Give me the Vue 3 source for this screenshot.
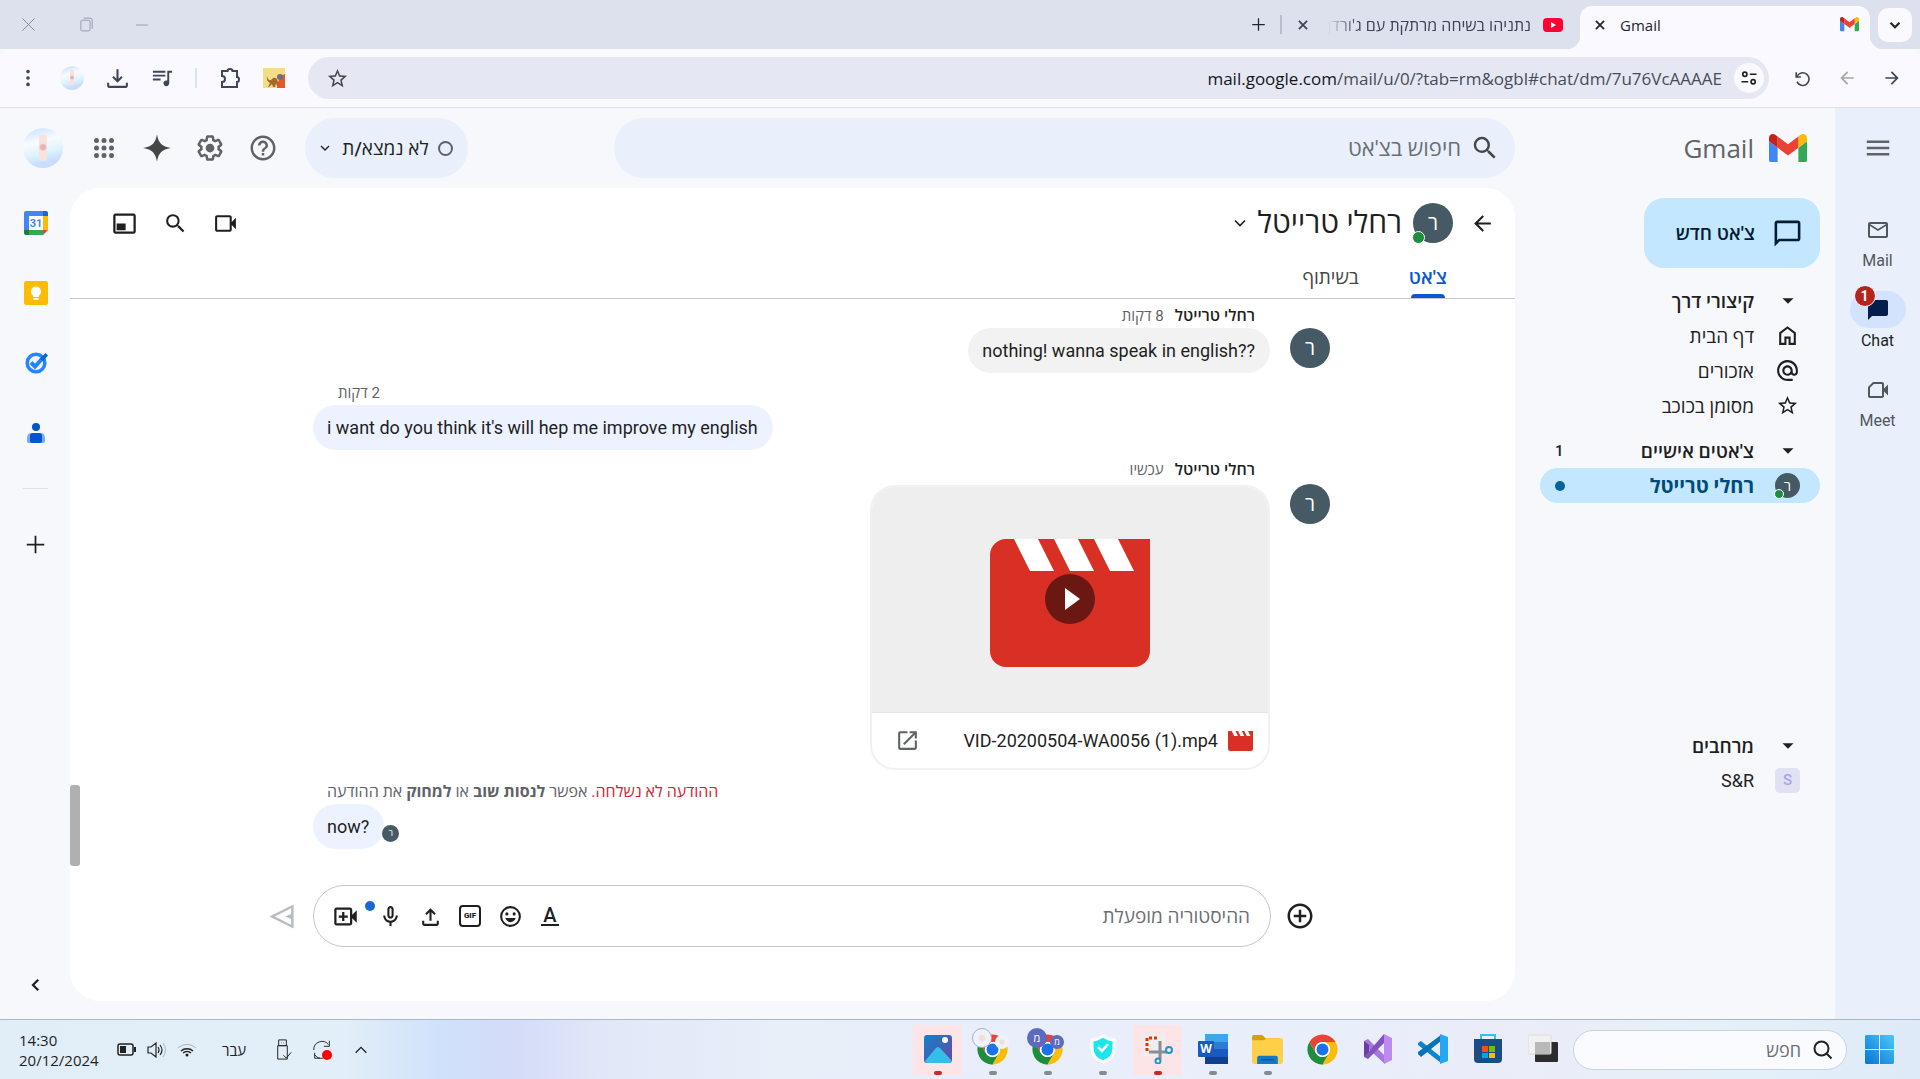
<script setup>
import { h, ref } from 'vue'

const paths = {
  menu: 'M3 18h18v-2H3v2zm0-5h18v-2H3v2zm0-7v2h18V6H3z',
  search: 'M15.5 14h-.79l-.28-.27A6.47 6.47 0 0 0 16 9.5 6.5 6.5 0 1 0 9.5 16c1.61 0 3.09-.59 4.23-1.57l.27.28v.79l5 4.99L20.49 19l-4.99-5zm-6 0C7.01 14 5 11.99 5 9.5S7.01 5 9.5 5 14 7.01 14 9.5 11.99 14 9.5 14z',
  help: 'M11 18h2v-2h-2v2zm1-16C6.48 2 2 6.48 2 12s4.48 10 10 10 10-4.48 10-10S17.52 2 12 2zm0 18c-4.41 0-8-3.59-8-8s3.59-8 8-8 8 3.59 8 8-3.59 8-8 8zm0-14c-2.21 0-4 1.79-4 4h2c0-1.1.9-2 2-2s2 .9 2 2c0 2-3 1.75-3 5h2c0-2.25 3-2.5 3-5 0-2.21-1.79-4-4-4z',
  settings: 'M13.85 22.25h-3.7c-.74 0-1.36-.54-1.45-1.27l-.27-1.89c-.27-.14-.53-.29-.79-.46l-1.8.72c-.7.26-1.47-.03-1.81-.65L2.2 15.53c-.35-.66-.2-1.44.36-1.88l1.53-1.19c-.01-.15-.02-.3-.02-.46 0-.15.01-.31.02-.46l-1.52-1.19c-.59-.45-.74-1.26-.37-1.88l1.85-3.19c.34-.62 1.11-.9 1.79-.63l1.81.73c.26-.17.52-.32.78-.46l.27-1.91c.09-.7.71-1.25 1.44-1.25h3.7c.74 0 1.36.54 1.45 1.27l.27 1.89c.27.14.53.29.79.46l1.8-.72c.71-.26 1.48.03 1.82.65l1.84 3.18c.36.66.2 1.44-.36 1.88l-1.52 1.19c.01.15.02.3.02.46s-.01.31-.02.46l1.52 1.19c.56.45.72 1.23.37 1.86l-1.86 3.22c-.34.62-1.11.9-1.8.63l-1.8-.72c-.26.17-.52.32-.78.46l-.27 1.91c-.1.68-.72 1.22-1.46 1.22zm-3.23-2h2.76l.37-2.55.53-.22c.44-.18.88-.44 1.34-.78l.45-.34 2.38.96 1.38-2.4-2.03-1.58.07-.56c.03-.26.06-.51.06-.78s-.03-.53-.06-.78l-.07-.56 2.03-1.58-1.39-2.4-2.39.96-.45-.35c-.42-.32-.87-.58-1.33-.77l-.52-.22-.37-2.55h-2.76l-.37 2.55-.53.21c-.44.19-.88.44-1.34.79l-.45.33-2.38-.95-1.39 2.39 2.03 1.58-.07.56a7 7 0 0 0-.06.79c0 .26.02.53.06.78l.07.56-2.03 1.58 1.38 2.4 2.39-.96.45.35c.43.33.86.58 1.33.77l.53.22.38 2.55zM12 8.5a3.5 3.5 0 1 1 0 7 3.5 3.5 0 0 1 0-7z',
  spark: 'M12 1c1.1 7 4 9.900 11 11-7 1.100-9.900 4-11 11-1.100-7-4-9.900-11-11 7-1.100 9.900-4 11-11z',
  apps: 'M6 8a2 2 0 1 0 0-4 2 2 0 0 0 0 4zm6 0a2 2 0 1 0 0-4 2 2 0 0 0 0 4zm6 0a2 2 0 1 0 0-4 2 2 0 0 0 0 4zM6 14a2 2 0 1 0 0-4 2 2 0 0 0 0 4zm6 0a2 2 0 1 0 0-4 2 2 0 0 0 0 4zm6 0a2 2 0 1 0 0-4 2 2 0 0 0 0 4zM6 20a2 2 0 1 0 0-4 2 2 0 0 0 0 4zm6 0a2 2 0 1 0 0-4 2 2 0 0 0 0 4zm6 0a2 2 0 1 0 0-4 2 2 0 0 0 0 4z',
  video: 'M18 10.500V6c0-1.100-.9-2-2-2H4c-1.100 0-2 .9-2 2v12c0 1.100.9 2 2 2h12c1.100 0 2-.9 2-2v-4.500l4 4v-11l-4 4zM16 18H4V6h12v12z',
  videoAdd: 'M18 10.500V6c0-1.100-.9-2-2-2H4c-1.100 0-2 .9-2 2v12c0 1.100.9 2 2 2h12c1.100 0 2-.9 2-2v-4.500l4 4v-11l-4 4zM16 18H4V6h12v12zM9 16h2v-3h3v-2h-3V8H9v3H6v2h3v3z',
  meet: 'M18 10.500V6c0-1.100-.9-2-2-2H7L2 9v9c0 1.100.9 2 2 2h12c1.100 0 2-.9 2-2v-4.500l4 4v-11l-4 4zM16 18H4V9.800L7.800 6H16v12z',
  pip: 'M20 3H4c-1.100 0-2 .9-2 2v14c0 1.100.9 2 2 2h16c1.100 0 2-.9 2-2V5c0-1.100-.9-2-2-2zm0 16H4V5h16v14zM5 12h8v6H5z',
  home: 'M6 19h3v-6h6v6h3v-9l-6-4.500L6 10v9zm-2 2V9l8-6 8 6v12h-7v-6h-2v6H4z',
  at: 'M12 2C6.480 2 2 6.480 2 12s4.480 10 10 10h5v-2h-5c-4.340 0-8-3.660-8-8s3.660-8 8-8 8 3.660 8 8v1.430c0 .79-.71 1.570-1.500 1.570s-1.500-.78-1.500-1.570V12c0-2.760-2.240-5-5-5s-5 2.240-5 5 2.240 5 5 5c1.380 0 2.640-.56 3.540-1.470.65.89 1.770 1.470 2.960 1.470 1.970 0 3.500-1.600 3.500-3.570V12c0-5.520-4.480-10-10-10zm0 13c-1.660 0-3-1.340-3-3s1.340-3 3-3 3 1.340 3 3-1.340 3-3 3z',
  star: 'M22 9.240l-7.190-.62L12 2 9.190 8.630 2 9.240l5.460 4.730L5.820 21 12 17.270 18.180 21l-1.630-7.030L22 9.240zM12 15.400l-3.760 2.270 1-4.280-3.320-2.880 4.380-.38L12 6.100l1.710 4.040 4.380.38-3.320 2.880 1 4.280L12 15.400z',
  mail: 'M20 4H4c-1.100 0-2 .9-2 2v12c0 1.100.9 2 2 2h16c1.100 0 2-.9 2-2V6c0-1.100-.9-2-2-2zm0 14H4V8l8 5 8-5v10zm-8-7L4 6h16l-8 5z',
  bubble: 'M20 2H4c-1.100 0-2 .9-2 2v18l4-4h14c1.100 0 2-.9 2-2V4c0-1.100-.9-2-2-2zm0 14H5.200L4 17.200V4h16v12z',
  bubbleFull: 'M20 2H4c-1.100 0-2 .9-2 2v18l4-4h14c1.100 0 2-.9 2-2V4c0-1.100-.9-2-2-2z',
  open: 'M19 19H5V5h7V3H5c-1.110 0-2 .9-2 2v14c0 1.100.89 2 2 2h14c1.100 0 2-.9 2-2v-7h-2v7zM14 3v2h3.590l-9.830 9.830 1.410 1.410L19 6.410V10h2V3h-7z',
  mic: 'M12 14c1.660 0 3-1.340 3-3V5c0-1.660-1.340-3-3-3S9 3.340 9 5v6c0 1.660 1.340 3 3 3zm-1-9c0-.55.45-1 1-1s1 .45 1 1v6c0 .55-.45 1-1 1s-1-.45-1-1V5zm6 6c0 2.760-2.240 5-5 5s-5-2.240-5-5H5c0 3.530 2.610 6.430 6 6.920V21h2v-3.080c3.390-.49 6-3.390 6-6.920h-2z',
  upload: 'M11 16V7.850l-2.600 2.600L7 9l5-5 5 5-1.400 1.450-2.600-2.600V16zm-5 5c-1.100 0-2-.9-2-2v-3h2v3h12v-3h2v3c0 1.100-.9 2-2 2z',
  download: 'M12 16l-5-5 1.400-1.450 2.600 2.600V3h2v9.150l2.600-2.600L17 11zM4 21c-1.100 0-2-.9-2-2v-3h2v3h16v-3h2v3c0 1.100-.9 2-2 2z',
  emoji: 'M12 2a10 10 0 1 0 0 20 10 10 0 0 0 0-20zm0 18a8 8 0 1 1 0-16 8 8 0 0 1 0 16zM8.500 11a1.500 1.500 0 1 0 0-3 1.500 1.500 0 0 0 0 3zm7 0a1.500 1.500 0 1 0 0-3 1.500 1.500 0 0 0 0 3zM7 13.500h10c-.8 2.400-2.700 4-5 4s-4.200-1.600-5-4z',
  addCircle: 'M13 7h-2v4H7v2h4v4h2v-4h4v-2h-4V7zm-1-5C6.480 2 2 6.480 2 12s4.480 10 10 10 10-4.480 10-10S17.520 2 12 2zm0 18c-4.410 0-8-3.590-8-8s3.590-8 8-8 8 3.590 8 8-3.590 8-8 8z',
  back: 'M20 11H7.830l5.590-5.590L12 4l-8 8 8 8 1.410-1.410L7.830 13H20v-2z',
  forward: 'M4 11h12.170l-5.590-5.590L12 4l8 8-8 8-1.410-1.410L16.170 13H4v-2z',
  queue: 'M22 4h-5v10.180c-.31-.11-.65-.18-1-.18-1.660 0-3 1.340-3 3s1.340 3 3 3 3-1.340 3-3V6h3V4zM15 4H2v2h13V4zm0 4H2v2h13V8zm-5 4H2v2h8v-2z',
  more: 'M12 7a2 2 0 1 0 0-4 2 2 0 0 0 0 4zm0 7a2 2 0 1 0 0-4 2 2 0 0 0 0 4zm0 7a2 2 0 1 0 0-4 2 2 0 0 0 0 4z',
  triangle: 'M6 9l6 6 6-6z',
  plus: 'M11 2h2v9h9v2h-9v9h-2v-9H2v-2h9z',
  tune: 'M7 4a3.500 3.500 0 1 0 0 7 3.500 3.500 0 0 0 0-7zm0 2a1.500 1.500 0 1 1 0 3 1.500 1.500 0 0 1 0-3zm6 .5h8v2h-8zM17 13a3.500 3.500 0 1 0 0 7 3.500 3.500 0 0 0 0-7zm0 2a1.500 1.500 0 1 1 0 3 1.500 1.500 0 0 1 0-3zM3 15.500h8v2H3z',
  send: 'M2 12L22 2v20L2 12zm4.500 0L20 18.800V14l-5-2 5-2V5.200L6.500 12z'
}
const strokes = {
  down: 'M6 9l6 6 6-6',
  up: 'M4 16l8-8 8 8',
  left: 'M15 5l-7 7 7 7',
  x: 'M5 5l14 14M19 5L5 19',
  minus: 'M3 12h18',
  restore: 'M6 6h9a2 2 0 0 1 2 2v11a2 2 0 0 1-2 2H6a2 2 0 0 1-2-2V8a2 2 0 0 1 2-2zM8 3h9a3 3 0 0 1 3 3v12',
  puzzle: 'M4 5h5.500a2.500 2 0 0 1 5 0H19v6a2 2.500 0 0 1 0 5v5H4v-5a3 3 0 0 0 0-6z',
  reload: 'M4 4v6h6M5 9.500A8 8 0 1 1 5 16',
  usb: 'M8 2h8v6H8zM10.500 5h.5M13 5h.5M17 8v14H7V8zM13 18l3 3 5-6',
  sync: 'M3 12a9 9 0 0 1 16-6M20 2v6h-6M4 15v6h6M4 17a9 9 0 0 0 9 4'
}
const Icon = ({ name, size = 25, weight = 2 }) =>
  h('svg', { class: 'icon', viewBox: '0 0 24 24', width: size, height: size, 'aria-hidden': 'true' },
    paths[name]
      ? [h('path', { d: paths[name], fill: 'currentColor', 'fill-rule': 'evenodd' })]
      : [h('path', { d: strokes[name], fill: 'none', stroke: 'currentColor', 'stroke-width': weight })])
Icon.props = ['name', 'size', 'weight']

const GmailMark = ({ width }) =>
  h('svg', { class: 'icon', viewBox: '0 0 88 66', width, 'aria-hidden': 'true' }, [
    h('path', { fill: '#4285f4', d: 'M6 66h14V32L0 17v43c0 3.320 2.690 6 6 6' }),
    h('path', { fill: '#34a853', d: 'M68 66h14c3.320 0 6-2.690 6-6V17L68 32' }),
    h('path', { fill: '#fbbc04', d: 'M68 6v26l20-15V9c0-7.420-8.470-11.650-14.400-7.200' }),
    h('path', { fill: '#ea4335', d: 'M20 32V6l24 18L68 6v26L44 50' }),
    h('path', { fill: '#c5221f', d: 'M0 9v8l20 15V6l-5.600-4.200C8.470-2.650 0 1.580 0 9' })
  ])
GmailMark.props = ['width']

const ChromeMark = () =>
  h('svg', { class: 'icon', viewBox: '0 0 48 48', width: 33, height: 33, 'aria-hidden': 'true' }, [
    h('path', { fill: '#1e8e3e', d: 'M4.950 13A22 22 0 0 0 24 46l9.530-16.500a11 11 0 0 1-19.060 0z' }),
    h('path', { fill: '#fbbc04', d: 'M24 46a22 22 0 0 0 19.050-33H24a11 11 0 0 1 9.530 16.500z' }),
    h('path', { fill: '#ea4335', d: 'M43.050 13a22 22 0 0 0-38.100 0l9.520 16.500A11 11 0 0 1 24 13z' }),
    h('circle', { cx: 24, cy: 24, r: 11, fill: '#fff' }),
    h('circle', { cx: 24, cy: 24, r: 8.7, fill: '#1a73e8' })
  ])

const shortcuts = [
  { icon: 'home', label: 'דף הבית' },
  { icon: 'at', label: 'אזכורים' },
  { icon: 'star', label: 'מסומן בכוכב' }
]
const apps = [
  { id: 'tasks', label: 'תצוגת משימות' },
  { id: 'store', label: 'Microsoft Store' },
  { id: 'vscode', label: 'Visual Studio Code' },
  { id: 'vs', label: 'Visual Studio' },
  { id: 'chrome', label: 'Chrome' },
  { id: 'files', label: 'סייר הקבצים', mark: 'idle' },
  { id: 'word', label: 'Word', mark: 'idle' },
  { id: 'snip', label: 'כלי החיתוך', mark: 'alert' },
  { id: 'shield', label: 'אבטחה', mark: 'idle' },
  { id: 'chromeM', label: 'Chrome מ', mark: 'idle' },
  { id: 'chromeP', label: 'Chrome אישי', mark: 'idle' },
  { id: 'photos', label: 'תמונות', mark: 'alert' }
]
const query = ref('')
const draft = ref('')
const find = ref('')
</script>

<template>
  <div class="screen" dir="rtl">
    <div class="tabstrip">
      <button class="tab-menu" aria-label="חיפוש כרטיסיות"><Icon name="down" :size="18" :weight="3" /></button>
      <div class="tab active">
        <GmailMark :width="19" />
        <span class="tab-title" dir="ltr">Gmail</span>
        <button class="plain" aria-label="סגירה"><Icon name="x" :size="14" :weight="3" /></button>
      </div>
      <div class="tab idle">
        <svg class="icon" viewBox="0 0 20 14" width="20" height="14"><rect width="20" height="14" rx="4" fill="#ff0033" /><path d="M8 4l5 3-5 3z" fill="#fff" /></svg>
        <span class="tab-title fade">נתניהו בשיחה מרתקת עם ג'ורדן</span>
        <button class="plain" aria-label="סגירה"><Icon name="x" :size="14" :weight="3" /></button>
      </div>
      <span class="tab-sep"></span>
      <button class="plain new-tab" aria-label="כרטיסייה חדשה"><Icon name="plus" :size="15" /></button>
      <div class="window-buttons">
        <button class="plain" aria-label="מזעור"><Icon name="minus" :size="16" :weight="1" /></button>
        <button class="plain" aria-label="שחזור"><Icon name="restore" :size="17" :weight="1" /></button>
        <button class="plain" aria-label="סגירת החלון"><Icon name="x" :size="21" :weight="1" /></button>
      </div>
    </div>

    <div class="toolbar">
      <div class="nav-buttons">
        <button class="plain" aria-label="הקודם"><Icon name="forward" :size="20" /></button>
        <button class="plain off" aria-label="הבא"><Icon name="back" :size="20" /></button>
        <button class="plain" aria-label="טעינה מחדש"><Icon name="reload" :size="19" :weight="2" /></button>
      </div>
      <div class="address">
        <button class="plain site-info" aria-label="פרטי האתר"><Icon name="tune" :size="20" /></button>
        <span class="url" dir="ltr"><b>mail.google.com</b>/mail/u/0/?tab=rm&amp;ogbl#chat/dm/7u76VcAAAAE</span>
        <button class="plain bookmark" aria-label="הוספה לסימניות"><Icon name="star" :size="23" /></button>
      </div>
      <div class="extensions">
        <svg class="icon" viewBox="0 0 22 20" width="22" height="20"><rect width="22" height="20" fill="#f3dd86" /><path d="M14 20l1-6 3-6 4-2v14z" fill="#e8562b" /><path d="M4 8q1 5 4 4 3-4 6-1l2 7h-2l-1-3-1 4h-2l-1-3-3 3H5l2-4Q3 13 4 8z" fill="#a8652e" /><circle cx="17" cy="9" r="3" fill="#6b6f80" /></svg>
        <button class="plain" aria-label="תוספים"><Icon name="puzzle" :size="24" :weight="2" /></button>
        <span class="tool-sep"></span>
        <button class="plain" aria-label="בקרת מדיה"><Icon name="queue" :size="23" /></button>
        <button class="plain" aria-label="הורדות"><Icon name="download" :size="25" /></button>
        <span class="portrait small"></span>
        <button class="plain" aria-label="עוד"><Icon name="more" :size="22" /></button>
      </div>
    </div>

    <div class="page">
      <nav class="rail">
        <button class="plain rail-menu" aria-label="תפריט ראשי"><Icon name="menu" :size="30" /></button>
        <a class="rail-item" href="#mail"><span class="rail-pill"><Icon name="mail" :size="24" /></span>Mail</a>
        <a class="rail-item on" href="#chat"><span class="rail-pill"><Icon name="bubbleFull" :size="24" /><span class="badge">1</span></span>Chat</a>
        <a class="rail-item" href="#meet"><span class="rail-pill"><Icon name="meet" :size="24" /></span>Meet</a>
      </nav>

      <div class="workspace">
        <header class="topbar">
          <a class="brand" href="#home"><GmailMark :width="38" /><span>Gmail</span></a>
          <label class="search">
            <Icon name="search" :size="30" />
            <input v-model="query" type="text" placeholder="חיפוש בצ'אט" aria-label="חיפוש בצ'אט" />
          </label>
          <button class="status"><span class="ring"></span>לא נמצא/ת<Icon name="down" :size="16" :weight="2" /></button>
          <div class="top-actions">
            <button class="plain" aria-label="תמיכה"><Icon name="help" :size="30" /></button>
            <button class="plain" aria-label="הגדרות"><Icon name="settings" :size="30" /></button>
            <button class="plain dark" aria-label="Gemini"><Icon name="spark" :size="30" /></button>
            <button class="plain" aria-label="אפליקציות"><Icon name="apps" :size="30" /></button>
          </div>
          <span class="portrait"></span>
        </header>

        <div class="columns">
          <aside class="sidebar">
            <button class="new-chat"><Icon name="bubble" :size="31" />צ'אט חדש</button>
            <section class="group">
              <h2 class="row head"><span class="lead"><Icon name="triangle" :size="22" /></span>קיצורי דרך</h2>
              <a v-for="s in shortcuts" :key="s.icon" class="row" :href="'#' + s.icon"><span class="lead"><Icon :name="s.icon" :size="s.icon === 'star' ? 23 : 25" /></span>{{ s.label }}</a>
            </section>
            <section class="group direct">
              <h2 class="row head"><span class="lead"><Icon name="triangle" :size="22" /></span>צ'אטים אישיים<span class="count">1</span></h2>
              <a class="row current" href="#dm"><span class="lead"><span class="avatar tiny">ר<i class="online"></i></span></span>רחלי טרייטל<span class="unread"></span></a>
            </section>
            <section class="group">
              <h2 class="row head"><span class="lead"><Icon name="triangle" :size="22" /></span>מרחבים</h2>
              <a class="row latin" href="#space"><span class="lead"><span class="space">S</span></span>S&amp;R</a>
            </section>
          </aside>

          <main class="panel">
            <div class="chat-head">
              <button class="plain" aria-label="חזרה"><Icon name="back" :size="25" /></button>
              <span class="avatar">ר<i class="online"></i></span>
              <h1>רחלי טרייטל</h1>
              <button class="plain" aria-label="אפשרויות"><Icon name="down" :size="20" :weight="2" /></button>
              <div class="chat-tools">
                <button class="plain" aria-label="שיחת וידאו"><Icon name="video" :size="25" /></button>
                <button class="plain" aria-label="חיפוש"><Icon name="search" :size="25" /></button>
                <button class="plain" aria-label="חלון צף"><Icon name="pip" :size="27" /></button>
              </div>
            </div>
            <div class="chat-tabs"><a class="on" href="#thread">צ'אט</a><a href="#shared">בשיתוף</a></div>

            <div class="thread">
              <div class="scroll-thumb"></div>
              <article class="message">
                <p class="meta"><b>רחלי טרייטל</b><span>8 דקות</span></p>
                <div class="body"><span class="avatar">ר</span><p class="bubble" dir="ltr">nothing! wanna speak in english??</p></div>
              </article>
              <article class="message mine">
                <p class="meta"><span>2 דקות</span></p>
                <p class="bubble" dir="ltr">i want do you think it's will hep me improve my english</p>
              </article>
              <article class="message media">
                <p class="meta"><b>רחלי טרייטל</b><span>עכשיו</span></p>
                <div class="body">
                  <span class="avatar">ר</span>
                  <div class="card">
                    <div class="preview">
                      <svg viewBox="0 0 160 128" width="160" height="128" aria-hidden="true">
                        <path d="M16 0H160V112a16 16 0 0 1-16 16H16a16 16 0 0 1-16-16V16A16 16 0 0 1 16 0z" fill="#d93025" />
                        <path d="M24 0H48L64 32H40zM64 0H88l16 32H80zM104 0h24l16 32h-24z" fill="#fff" />
                        <circle cx="80" cy="60" r="25" fill="#6c1812" /><path d="M75 49v22l15-11z" fill="#fff" />
                      </svg>
                    </div>
                    <div class="file">
                      <svg viewBox="0 0 160 128" width="25" height="20" aria-hidden="true">
                        <path d="M0 0H160V112a16 16 0 0 1-16 16H16a16 16 0 0 1-16-16z" fill="#d93025" />
                        <path d="M24 0H48L64 32H40zM64 0H88l16 32H80zM104 0h24l16 32h-24z" fill="#fff" />
                      </svg>
                      <span dir="ltr">VID-20200504-WA0056 (1).mp4</span>
                      <button class="plain" aria-label="פתיחה בכרטיסייה חדשה"><Icon name="open" :size="25" /></button>
                    </div>
                  </div>
                </div>
              </article>
              <article class="message mine">
                <p class="failed"><em>ההודעה לא נשלחה.</em> אפשר <b>לנסות שוב</b> או <b>למחוק</b> את ההודעה</p>
                <p class="bubble" dir="ltr">now?<span class="avatar seen">ר</span></p>
              </article>
            </div>

            <form class="composer" @submit.prevent>
              <button class="plain" type="button" aria-label="הוספה"><Icon name="addCircle" :size="30" /></button>
              <div class="field">
                <input v-model="draft" type="text" placeholder="ההיסטוריה מופעלת" aria-label="ההיסטוריה מופעלת" />
                <div class="tools">
                  <button class="plain" type="button" aria-label="עיצוב"><span class="format">A</span></button>
                  <button class="plain" type="button" aria-label="אמוג'י"><Icon name="emoji" :size="25" /></button>
                  <button class="plain" type="button" aria-label="GIF"><span class="gif">GIF</span></button>
                  <button class="plain" type="button" aria-label="העלאה"><Icon name="upload" :size="25" /></button>
                  <button class="plain mic" type="button" aria-label="הקלטה"><Icon name="mic" :size="25" /></button>
                  <button class="plain wide" type="button" aria-label="פגישה"><Icon name="videoAdd" :size="27" /></button>
                </div>
              </div>
              <button class="plain send" type="submit" aria-label="שליחה"><Icon name="send" :size="29" /></button>
            </form>
          </main>

          <aside class="addons">
            <button class="plain" aria-label="יומן">
              <svg viewBox="0 0 24 24" width="24" height="24"><path d="M2 0h17v5H5v14H0V2a2 2 0 0 1 2-2z" fill="#4285f4" /><path d="M19 0h3a2 2 0 0 1 2 2v3h-5z" fill="#1967d2" /><path d="M19 5h5v14h-5z" fill="#fbbc04" /><path d="M5 19h14v5H5z" fill="#34a853" /><path d="M0 19h5v5H2a2 2 0 0 1-2-2z" fill="#188038" /><path d="M19 19h5l-5 5z" fill="#ea4335" /><path d="M5 5h14v14H5z" fill="#fff" /><text x="12" y="16" text-anchor="middle" font-size="11" font-weight="700" fill="#4285f4">31</text></svg>
            </button>
            <button class="plain" aria-label="Keep">
              <svg viewBox="0 0 24 24" width="24" height="24"><rect width="24" height="24" rx="2" fill="#fbbc04" /><path d="M12 5.500a5 5 0 0 1 3 9V16H9v-1.500a5 5 0 0 1 3-9zM9.500 17h5v2h-5z" fill="#fff" /></svg>
            </button>
            <button class="plain" aria-label="משימות">
              <svg viewBox="0 0 24 24" width="24" height="24"><circle cx="12" cy="12" r="8.800" fill="none" stroke="#2684fc" stroke-width="3.500" /><path d="M7 11.500l4 4L20.500 5" fill="none" stroke="#2684fc" stroke-width="4" /><path d="M16 8l5.500-6L24 4.500 19 10z" fill="#0066da" /></svg>
            </button>
            <button class="plain" aria-label="אנשי קשר">
              <svg viewBox="0 0 24 24" width="24" height="24"><circle cx="12" cy="6" r="4" fill="#0057cc" /><path d="M8 12h8q5 0 5 5v3q0 2-2 2H4q-1 0-1-2v-3q0-5 5-5z" fill="#7baaf7" /><path d="M9 12h6q3 0 3 3v5q0 2-2 2H8q-2 0-2-2v-5q0-3 3-3z" fill="#0057cc" /></svg>
            </button>
            <hr />
            <button class="plain get-more" aria-label="הורדת תוספים"><Icon name="plus" :size="21" /></button>
            <button class="plain collapse" aria-label="הסתרת החלונית"><Icon name="left" :size="18" :weight="3" /></button>
          </aside>
        </div>
      </div>
    </div>

    <footer class="taskbar">
      <button class="plain start" aria-label="התחל">
        <svg viewBox="0 0 29 29" width="29" height="29"><defs><linearGradient id="win" x1="1" y1="0" x2="0" y2="1"><stop offset="0" stop-color="#4cc9fb" /><stop offset="1" stop-color="#0873d1" /></linearGradient></defs><path d="M1 0h13v14H0V1zM15 0h13l1 1v13H15zM0 15h14v14H1l-1-1zM15 15h14v13l-1 1H15z" fill="url(#win)" /></svg>
      </button>
      <label class="task-search"><svg viewBox="0 0 20 20" width="20" height="20"><path d="M8.500 1.500a7 7 0 1 0 0 14 7 7 0 0 0 0-14zM13.500 13.500l5 5" fill="none" stroke="#222" stroke-width="2" /></svg><input v-model="find" type="text" placeholder="חפש" aria-label="חפש" /></label>
      <div class="apps">
        <button v-for="a in apps" :key="a.id" class="app" :class="a.mark" :aria-label="a.label">
          <svg v-if="a.id === 'tasks'" viewBox="0 0 30 30" width="30" height="30"><rect x="7" y="8" width="23" height="20" rx="1" fill="#2d2d2d" /><rect x="0" y="1" width="23" height="19" rx="1" fill="#f1f1f1" stroke="#dcdcdc" /><path d="M7 8h15v12H7z" fill="#b9b9b9" /></svg>
          <svg v-else-if="a.id === 'store'" viewBox="0 0 30 30" width="30" height="30"><path d="M8 6V1h14v5" fill="none" stroke="#2fc1f3" stroke-width="2" /><path d="M1 5h28v20q0 4-4 4H5q-4 0-4-4z" fill="#1a4c86" /><path d="M9 12h6v6H9z" fill="#f25022" /><path d="M16 12h6v6h-6z" fill="#7fba00" /><path d="M9 19h6v5H9z" fill="#00a4ef" /><path d="M16 19h6v5h-6z" fill="#ffb900" /></svg>
          <svg v-else-if="a.id === 'vscode'" viewBox="0 0 30 30" width="30" height="30"><path d="M0 9l3-2 20 16v6L0 11z" fill="#0a87d0" /><path d="M0 20l3 3L23 7V1L0 18z" fill="#0673b5" /><path d="M22 0l8 3v24l-8 3z" fill="#27a6f2" /></svg>
          <svg v-else-if="a.id === 'vs'" viewBox="0 0 30 30" width="30" height="30"><path d="M1 7l4-2 17 17v8L1 11z" fill="#a775dc" /><path d="M1 7v16l5-4V11z" fill="#6a3ea1" /><path d="M5 25l-4-2L21 0v9z" fill="#8252bd" /><path d="M21 0l8 4v22l-8 4z" fill="#bd8bf0" /></svg>
          <ChromeMark v-else-if="a.id === 'chrome'" />
          <svg v-else-if="a.id === 'files'" viewBox="0 0 30 30" width="31" height="31"><path d="M0 3q0-2 2-2h8l3 3h14v8H0z" fill="#dc9c0b" /><path d="M0 6h12l2-2h14q2 0 2 2v20q0 3-2 3H2q-2 0-2-2z" fill="#ffcf48" /><path d="M5 29v-6q0-2 2-2h16q2 0 2 2v6z" fill="#1378c6" /><path d="M9 25h12" stroke="#0a4c91" stroke-width="1" /></svg>
          <svg v-else-if="a.id === 'word'" viewBox="0 0 30 30" width="30" height="30"><path d="M7 0h23v8H7z" fill="#41a5ee" /><path d="M7 8h23v7H7z" fill="#2b7cd3" /><path d="M7 15h23v8H7z" fill="#185abd" /><path d="M7 23h23v7H7z" fill="#103f91" /><rect y="7" width="16" height="16" rx="1" fill="#185abd" /><text x="8" y="19" text-anchor="middle" font-size="12" font-weight="700" fill="#fff">W</text></svg>
          <svg v-else-if="a.id === 'snip'" viewBox="0 0 30 30" width="30" height="30"><rect width="22" height="22" rx="1" fill="#eee" /><path d="M4 17V4h12" fill="none" stroke="#d83b01" stroke-width="3" stroke-dasharray="3 2" /><path d="M6 18h18M17 7v18" stroke="#888e94" stroke-width="3" /><circle cx="26" cy="16" r="3" fill="none" stroke="#1c94d8" stroke-width="2" /><circle cx="15" cy="27" r="2.500" fill="none" stroke="#1c94d8" stroke-width="2" /></svg>
          <svg v-else-if="a.id === 'shield'" viewBox="0 0 30 30" width="30" height="30"><path d="M15 2q6 4 11 4v8q0 10-11 14Q4 24 4 14V6q5 0 11-4z" fill="#1ce5ec" stroke="#fff" stroke-width="3" /><path d="M10 13l4 4 6-7" fill="none" stroke="#fff" stroke-width="2.500" /></svg>
          <span v-else-if="a.id === 'chromeM'" class="profile"><ChromeMark /><i class="p-big">מ</i><i class="p-small">מ</i></span>
          <span v-else-if="a.id === 'chromeP'" class="profile"><ChromeMark /><i class="p-big face"></i><i class="p-small face"></i></span>
          <svg v-else viewBox="0 0 28 28" width="28" height="28"><defs><linearGradient id="sky" x1="0" y1="0" x2="1" y2="1"><stop offset="0" stop-color="#0e81cc" /><stop offset="1" stop-color="#6c47a1" /></linearGradient></defs><rect width="28" height="28" rx="3" fill="url(#sky)" /><path d="M1 26l11-13q2-2 4 0l12 13-2 2H3z" fill="#37bdea" /><circle cx="21" cy="5" r="3" fill="#fff" /></svg>
        </button>
      </div>
      <div class="tray">
        <button class="plain tray-up" aria-label="סמלים מוסתרים"><Icon name="up" :size="16" :weight="2" /></button>
        <span class="sync"><Icon name="sync" :size="22" :weight="1" /></span>
        <span class="usb"><Icon name="usb" :size="23" :weight="1" /></span>
        <span class="lang">עבר</span>
        <div class="system">
          <svg viewBox="0 0 20 16" width="20" height="16"><path d="M1 6a13 13 0 0 1 18 0" fill="none" stroke="#aab4bc" /><path d="M4 9a9 9 0 0 1 12 0M6 11a6 6 0 0 1 8 0" fill="none" stroke="#222" stroke-width="1.500" /><circle cx="10" cy="13" r="1.500" fill="#222" /></svg>
          <svg viewBox="0 0 20 16" width="20" height="16"><path d="M1 5h3l5-4v14l-5-4H1zM11 5q2 3 0 6M13 3q4 5 0 10" fill="none" stroke="#222" stroke-width="1.200" /><path d="M16 1q5 7 0 14" fill="none" stroke="#aab4bc" /></svg>
          <svg viewBox="0 0 20 14" width="20" height="14"><rect x="1" y="1" width="15" height="11" rx="2" fill="none" stroke="#222" stroke-width="1.500" /><path d="M3 3h6v7H3zM17 4h2v5h-2z" fill="#222" /></svg>
        </div>
        <time dir="ltr">14:30<br />20/12/2024</time>
      </div>
    </footer>
  </div>
</template>

<style>
body { margin: 0; background: #f6f8fc; }
</style>

<style scoped>
.screen { display: flex; flex-direction: column; min-height: 100vh; font-family: Roboto, "Open Sans", sans-serif; font-size: 18px; color: #1f1f1f; }
.screen * { box-sizing: border-box; }
button, input { font: inherit; color: inherit; border: 0; background: none; padding: 0; margin: 0; outline: none; }
a { color: inherit; text-decoration: none; }
p, h1, h2 { margin: 0; font-weight: 400; }
svg { display: block; flex: none; }
.plain { display: flex; align-items: center; justify-content: center; }

.tabstrip { display: flex; align-items: center; height: 49px; padding: 0 8px; background: #dde1ed; color: #1f2430; font-family: "Open Sans", sans-serif; font-size: 15px; }
.tab-menu { display: flex; align-items: center; justify-content: center; width: 34px; height: 34px; margin-left: 8px; border-radius: 10px; background: #faf9ff; }
.tab { display: flex; align-items: center; }
.tab.active { position: relative; width: 290px; height: 43px; align-self: flex-end; padding: 0 11px 6px 13px; border-radius: 12px 12px 0 0; background: #faf9ff; }
.tab.active::before, .tab.active::after { content: ""; position: absolute; bottom: 0; width: 14px; height: 14px; }
.tab.active::before { right: -14px; background: radial-gradient(circle at 100% 0, transparent 14px, #faf9ff 15px); }
.tab.active::after { left: -14px; background: radial-gradient(circle at 0 0, transparent 14px, #faf9ff 15px); }
.tab.active .tab-title { margin-right: auto; margin-left: 13px; }
.tab.idle { gap: 12px; padding-right: 17px; color: #3c4356; }
.tab.idle .tab-title { width: 203px; margin-left: 6px; overflow: hidden; white-space: nowrap; font-size: 16px; -webkit-mask-image: linear-gradient(to right, transparent, #000 30px); mask-image: linear-gradient(to right, transparent, #000 30px); }
.tab-sep { width: 2px; height: 19px; margin: 0 14px; background: #b9bccb; }
.window-buttons { display: flex; align-items: center; gap: 39px; margin-right: auto; padding-left: 10px; color: #7d8190; }

.toolbar { display: flex; align-items: center; height: 59px; padding: 0 18px 0 17px; border-bottom: 1px solid #dde1ec; border-radius: 10px 10px 0 0; background: #faf9ff; color: #3c4659; }
.nav-buttons { display: flex; align-items: center; gap: 25px; margin-left: 24px; }
.off { color: #a3a5ad; }
.address { display: flex; flex: 1; align-items: center; height: 42px; padding: 0 5px 0 18px; border-radius: 21px; background: #e5e8f3; }
.site-info { width: 30px; height: 30px; border-radius: 50%; background: #faf9ff; color: #1f1f1f; }
.url { margin-right: 12px; font-family: "Open Sans", sans-serif; font-size: 17px; color: #474c57; }
.url b { font-weight: 400; color: #14161b; }
.bookmark { margin-right: auto; color: #474747; }
.extensions { display: flex; align-items: center; gap: 21px; margin-right: 23px; }
.tool-sep { width: 2px; height: 20px; background: #d3e3fd; }
.portrait { flex: none; width: 40px; height: 40px; border-radius: 50%; background: radial-gradient(circle at 50% 48%, #eab0b4 0 8%, transparent 14%), linear-gradient(90deg, transparent 40%, #f6e4dc 40% 60%, transparent 60%) 0 50% / 100% 64% no-repeat, linear-gradient(165deg, #d9eaff 15%, #f8fbff 35%, #ddf3fd 60%, #c9ddfd 80%); }
.portrait.small { width: 24px; height: 24px; }

.page { display: flex; flex: 1; background: #f6f8fc; }
.rail { display: flex; flex-direction: column; align-items: center; flex: none; width: 85px; padding-top: 25px; background: #e9f0fb; color: #444746; }
.rail-menu { margin-bottom: 48px; color: #5f6368; }
.rail-item { display: flex; flex-direction: column; align-items: center; gap: 2px; height: 80px; font-size: 16px; line-height: 22px; color: #53575b; }
.rail-pill { position: relative; display: flex; align-items: center; justify-content: center; width: 56px; height: 37px; border-radius: 19px; }
.rail-item.on { color: #1f1f1f; }
.on .rail-pill { background: #d3e3fd; color: #041e49; }
.badge { position: absolute; top: -6px; left: 4px; width: 22px; height: 22px; border: 1px solid #f6f8fc; border-radius: 50%; background: #b3261e; color: #fff; font-size: 14px; font-weight: 700; line-height: 20px; text-align: center; }

.workspace { display: flex; flex: 1; flex-direction: column; min-width: 0; padding-bottom: 18px; }
.topbar { display: flex; align-items: center; height: 80px; padding-left: 23px; color: #5f6368; }
.brand { display: flex; align-items: center; gap: 15px; flex: none; width: 320px; padding-right: 28px; font-family: "Open Sans", sans-serif; font-size: 26px; font-weight: 500; }
.search { display: flex; align-items: center; gap: 9px; flex: 1; height: 60px; margin-left: 146px; padding: 0 15px; border-radius: 30px; background: #e9f0fb; color: #444746; }
.search input { flex: 1; font-size: 22px; }
input::placeholder { color: #6b6f73; opacity: 1; }
.status { display: flex; align-items: center; justify-content: space-between; width: 163px; height: 60px; padding: 0 15px 0 12px; border-radius: 30px; background: #e9f0fb; color: #1f1f1f; font-size: 19px; font-weight: 500; }
.ring { width: 15px; height: 15px; border: 2px solid #5f6368; border-radius: 50%; }
.top-actions { display: flex; margin: 0 16px 0 14px; }
.top-actions .plain { width: 53px; height: 53px; }
.dark { color: #444746; }

.columns { display: flex; flex: 1; }
.sidebar { flex: none; width: 320px; padding: 10px 15px 0 25px; }
.new-chat { display: flex; align-items: center; gap: 17px; width: 176px; height: 70px; margin-bottom: 15px; padding-right: 17px; border-radius: 20px; background: #c2e7ff; color: #001d35; font-size: 19px; font-weight: 600; }
.group { margin-bottom: 10px; }
.group.direct { margin-bottom: 225px; }
.row { display: flex; align-items: center; height: 35px; padding: 0 20px 0 15px; border-radius: 18px; font-size: 19px; }
.row.latin { font-size: 18px; }
.head { font-weight: 600; }
.lead { display: flex; align-items: center; justify-content: center; width: 25px; margin-left: 21px; }
.count { margin-right: auto; font-size: 15px; font-weight: 500; }
.current { background: #c2e7ff; color: #004a77; font-size: 20px; font-weight: 700; }
.unread { width: 10px; height: 10px; margin-right: auto; border-radius: 50%; background: #00639b; }
.space { width: 25px; height: 25px; border-radius: 5px; background: #e1e1f4; color: #a8a4f0; font-size: 15px; font-weight: 500; line-height: 25px; text-align: center; }
.avatar { position: relative; flex: none; display: flex; align-items: center; justify-content: center; width: 40px; height: 40px; border-radius: 50%; background: #455a64; color: #fff; font-size: 20px; line-height: 1; }
.avatar.tiny { width: 25px; height: 25px; font-size: 14px; font-weight: 400; }
.online { position: absolute; bottom: -1px; left: -1px; width: 13px; height: 13px; border: 1px solid #fff; border-radius: 50%; background: #1e8e3e; }
.tiny .online { width: 10px; height: 10px; }

.panel { display: flex; flex: 1; flex-direction: column; min-width: 0; padding-bottom: 54px; border-radius: 30px; background: #fff; }
.chat-head { display: flex; align-items: center; height: 70px; padding: 0 20px 0 41px; }
.chat-head .avatar { margin-right: 17px; }
.chat-head h1 { margin: 0 11px 0 8px; font-size: 30px; line-height: 40px; }
.chat-tools { display: flex; gap: 25px; margin-right: auto; }
.chat-tabs { display: flex; gap: 50px; height: 41px; padding-right: 68px; border-bottom: 1px solid #c7c7c7; font-size: 19px; line-height: 40px; color: #444746; }
.chat-tabs .on { position: relative; font-weight: 600; color: #0b57d0; }
.chat-tabs .on::after { content: ""; position: absolute; right: 2px; bottom: 0; left: 2px; height: 4px; border-radius: 4px 4px 0 0; background: #0b57d0; }
.thread { position: relative; flex: 1; padding: 0 185px 0 243px; }
.scroll-thumb { position: absolute; bottom: 19px; left: 0; width: 10px; height: 81px; border-radius: 3px; background: #b0b0b0; }
.message { display: flex; flex-direction: column; margin-bottom: 8px; }
.message:nth-of-type(1) { margin-top: 5px; }
.message.mine { align-items: flex-end; }
.meta { display: flex; gap: 11px; padding-right: 75px; font-size: 16px; line-height: 24px; }
.meta b { font-weight: 600; }
.meta span { font-size: 15px; color: #5f6368; }
.mine .meta { padding: 0 0 0 25px; }
.body { display: flex; align-items: flex-start; gap: 20px; }
.media .body { padding: 2px 0; }
.bubble { display: flex; align-items: center; position: relative; height: 45px; padding: 0 15px 1px 14px; border-radius: 23px; background: #f2f2f2; }
.mine .bubble { background: #ecf2ff; }
.seen { position: absolute; right: -15px; bottom: 7px; width: 17px; height: 17px; font-size: 9px; }
.card { width: 400px; height: 285px; margin-top: 1px; overflow: hidden; border: 2px solid #f1f1f1; border-radius: 25px; }
.preview { display: flex; justify-content: center; height: 226px; padding-top: 52px; border-bottom: 1px solid #e4e5e8; background: #eee; }
.file { display: flex; align-items: center; gap: 10px; height: 55px; padding: 0 15px 0 23px; }
.file .plain { margin-right: auto; color: #5f6368; }
.failed { padding-left: 14px; font-size: 16px; line-height: 24px; color: #5f6368; }
.failed em { font-style: normal; color: #d01f2e; }

.composer { display: flex; align-items: center; padding: 0 200px 0 197px; }
.field { display: flex; align-items: center; flex: 1; height: 62px; margin: 0 14px 0 17px; padding: 0 20px 0 6px; border: 1px solid #c4c7c5; border-radius: 31px; }
.field input { flex: 1; min-width: 0; font-size: 19px; }
.tools { display: flex; }
.tools .plain { position: relative; width: 40px; height: 40px; }
.tools .wide { width: 50px; }
.mic::after { content: ""; position: absolute; top: 5px; left: -5px; width: 10px; height: 10px; border-radius: 50%; background: #1967d2; }
.format { width: 18px; border-bottom: 2px solid #1f1f1f; font-size: 20px; font-weight: 500; line-height: 18px; text-align: center; }
.gif { width: 22px; height: 22px; border: 2px solid #1f1f1f; border-radius: 4px; font-size: 8px; font-weight: 900; line-height: 18px; text-align: center; }
.send { color: #b8bbbf; }

.addons { display: flex; flex-direction: column; align-items: center; flex: none; width: 70px; padding: 12px 0 0 1px; }
.addons .plain { width: 46px; height: 46px; margin-bottom: 24px; }
.addons hr { width: 25px; height: 1px; margin: 8px 0 32px; border: 0; background: #dfe1e5; }
.addons .collapse { margin: auto 0 -7px; }

.taskbar { display: flex; align-items: center; height: 60px; padding: 0 26px 0 19px; border-top: 1px solid #aeb6c4; background: linear-gradient(90deg, #e1eef8 0, #e2eef8 18%, #cfe1fb 23%, #d4dcf8 27%, #e0e7f8 31%, #e8eff9 40%, #e9eefb 70%, #ebedf8 80%, #e4f0f9 90%, #dfeaf8 100%); font-family: "Open Sans", sans-serif; }
.task-search { display: flex; align-items: center; gap: 12px; width: 274px; height: 40px; margin: 0 18px 0 3px; padding: 0 13px; border: 1px solid #ccd2da; border-radius: 20px; background: #f9fbfe; }
.task-search input { flex: 1; min-width: 0; font-size: 18px; }
.apps { display: flex; }
.app { position: relative; display: flex; align-items: center; justify-content: center; width: 55px; height: 56px; padding-bottom: 1px; }
.app.alert { background: linear-gradient(#fde5e7, #fde5e7) center / 49px 50px no-repeat; }
.app.idle::after, .app.alert::after { content: ""; position: absolute; bottom: 3px; left: 24px; width: 8px; height: 4px; border-radius: 2px; background: #868a90; }
.app.alert::after { background: #c42b1c; }
.profile { position: relative; }
.profile i { position: absolute; display: flex; align-items: center; justify-content: center; border-radius: 50%; background: #5c6bc0; color: #fff; font-size: 11px; line-height: 1; font-style: normal; }
.profile .p-big { top: -5px; left: -4px; width: 20px; height: 20px; }
.profile .p-small { top: 2px; right: 0; width: 14px; height: 14px; font-size: 9px; }
.profile .face { background: radial-gradient(ellipse at 50% 50%, #f3dcd8 0 20%, #eef3fb 35%); }
.profile .p-big.face { border: 1px solid #a9b0ba; }
.tray { display: flex; align-items: center; margin-right: auto; }
.tray-up { margin-left: 20px; }
.sync { position: relative; margin-left: 17px; }
.sync::after { content: ""; position: absolute; right: 1px; bottom: 1px; width: 10px; height: 10px; border-radius: 50%; background: #f00; }
.usb { margin-left: 25px; }
.lang { margin-left: 25px; font-size: 15px; }
.system { display: flex; align-items: center; gap: 10px; margin-left: 20px; }
time { width: 78px; font-size: 15px; line-height: 20px; text-align: left; }
</style>
